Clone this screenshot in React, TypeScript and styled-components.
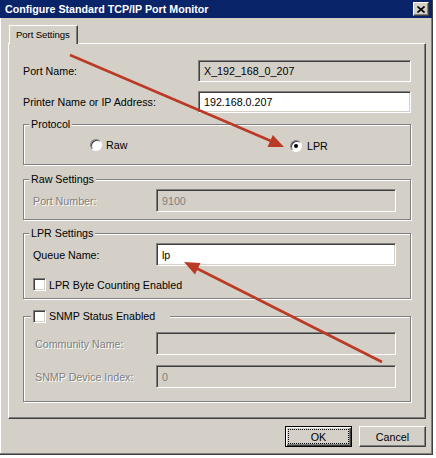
import styled, { createGlobalStyle } from "styled-components";

const face = "#d4d0c8";
const light = "#ffffff";
const shadow = "#808080";
const dark = "#404040";

const GlobalStyle = createGlobalStyle`
  html, body {
    margin: 0;
    background: #ffffff;
  }
  body {
    font-family: "Liberation Sans", Arial, sans-serif;
    font-size: 10.7px;
    color: #000;
  }
`;

const Page = styled.div`
  position: relative;
  width: 436px;
  height: 458px;
  overflow: hidden;
`;

const Window = styled.div`
  width: 433px;
  height: 455px;
  box-sizing: border-box;
  background: ${face};
  border-right: 1px solid ${dark};
  border-bottom: 1px solid ${dark};
  box-shadow: inset -1px -1px ${shadow}, inset 1px 0 ${light};
  display: flex;
  flex-direction: column;
`;

const TitleBar = styled.div`
  flex-shrink: 0;
  height: 18px;
  display: flex;
  align-items: center;
  justify-content: space-between;
  padding: 0 3px 0 5px;
  background: #0a246a;
  color: #fff;
  font-weight: 700;
  font-size: 10.7px;
`;

const CloseButton = styled.span`
  width: 16px;
  height: 14px;
  box-sizing: border-box;
  background: ${face};
  border: 1px solid;
  border-color: ${light} ${dark} ${dark} ${light};
  box-shadow: inset -1px -1px ${shadow};
  display: flex;
  align-items: center;
  justify-content: center;
`;

const Body = styled.div`
  flex: 1;
  padding: 7px 6px 0 8px;
  display: flex;
  flex-direction: column;
`;

const TabStrip = styled.div`
  display: flex;
  height: 18px;
  padding-left: 1px;
`;

const Tab = styled.div`
  position: relative;
  z-index: 1;
  height: 19px;
  margin-bottom: -1px;
  box-sizing: border-box;
  padding: 2px 7px 0 6px;
  background: ${face};
  border: 1px solid;
  border-bottom: none;
  border-color: ${light} ${dark} transparent ${light};
  box-shadow: inset -1px 0 ${shadow};
  font-size: 9.6px;
  line-height: 14px;
  letter-spacing: -0.1px;
`;

const Panel = styled.div`
  height: 376px;
  box-sizing: border-box;
  border: 1px solid;
  border-color: ${light} ${dark} ${dark} ${light};
  box-shadow: inset -1px -1px ${shadow};
  padding: 16px 14px 0 14px;
  display: flex;
  flex-direction: column;
`;

const TopRow = styled.div<{ $mt?: number }>`
  display: grid;
  grid-template-columns: 175px 1fr;
  align-items: center;
  margin-top: ${(p) => p.$mt ?? 0}px;
`;

const Label = styled.span<{ $disabled?: boolean; $indent?: number }>`
  padding-left: ${(p) => p.$indent ?? 0}px;
  white-space: nowrap;
  color: ${(p) => (p.$disabled ? shadow : "#000")};
  text-shadow: ${(p) => (p.$disabled ? `1px 1px 0 ${light}` : "none")};
`;

const Field = styled.div<{ $disabled?: boolean; $readOnly?: boolean; $h?: number }>`
  height: ${(p) => p.$h ?? 23}px;
  box-sizing: border-box;
  border: 1px solid;
  border-color: ${shadow} ${light} ${light} ${shadow};
  box-shadow: inset 1px 1px ${dark}, inset -1px -1px ${face};
  background: ${(p) => (p.$disabled || p.$readOnly ? face : "#fff")};
  color: ${(p) => (p.$disabled ? shadow : "#000")};
  padding-left: 5px;
  display: flex;
  align-items: center;
`;

const Group = styled.fieldset<{ $mt: number }>`
  margin: ${(p) => p.$mt}px 0 0;
  padding: 0;
  min-width: 0;
  border: 1px solid ${shadow};
  box-shadow: inset 1px 1px ${light}, 1px 1px ${light};
`;

const Legend = styled.legend<{ $ml?: number; $pr?: number }>`
  margin-left: ${(p) => p.$ml ?? 5}px;
  padding: 0 ${(p) => p.$pr ?? 2}px 0 2px;
  line-height: 13px;
  background: ${face};
  display: flex;
  align-items: center;
  gap: 3px;
`;

const GroupBody = styled.div<{ $pad: string; $gap?: number }>`
  padding: ${(p) => p.$pad};
  display: flex;
  flex-direction: column;
  gap: ${(p) => p.$gap ?? 0}px;
`;

const GroupRow = styled.div`
  display: grid;
  grid-template-columns: 123px 1fr;
  align-items: center;
`;

const RadioRow = styled.div`
  display: grid;
  grid-template-columns: 200px auto;
  padding-left: 57px;
  height: 13px;
  align-items: center;
`;

const Option = styled.span<{ $gap?: number; $dy?: number }>`
  display: inline-flex;
  align-items: center;
  gap: ${(p) => p.$gap ?? 4}px;
  margin-top: ${(p) => p.$dy ?? 0}px;
`;

const Radio = styled.span<{ $checked?: boolean }>`
  width: 12px;
  height: 12px;
  box-sizing: border-box;
  border-radius: 50%;
  background: #fff;
  border: 1px solid;
  border-color: ${shadow} ${light} ${light} ${shadow};
  box-shadow: inset 1px 1px ${dark};
  display: flex;
  align-items: center;
  justify-content: center;
  &::after {
    content: "";
    width: 4px;
    height: 4px;
    border-radius: 50%;
    background: ${(p) => (p.$checked ? "#000" : "transparent")};
  }
`;

const Checkbox = styled.span`
  width: 13px;
  height: 13px;
  box-sizing: border-box;
  background: #fff;
  border: 1px solid;
  border-color: ${shadow} ${light} ${light} ${shadow};
  box-shadow: inset 1px 1px ${dark}, inset -1px -1px ${face};
  flex-shrink: 0;
`;

const Footer = styled.div`
  display: flex;
  justify-content: flex-end;
  gap: 7px;
  padding-top: 7px;
`;

const Button = styled.div<{ $default?: boolean }>`
  width: 67px;
  height: 21px;
  box-sizing: border-box;
  background: ${face};
  border: 1px solid;
  border-color: ${(p) => (p.$default ? "#000" : `${light} ${dark} ${dark} ${light}`)};
  box-shadow: ${(p) =>
    p.$default
      ? `inset 1px 1px ${light}, inset -1px -1px ${dark}, inset -2px -2px ${shadow}`
      : `inset -1px -1px ${shadow}`};
  display: flex;
  align-items: stretch;
  justify-content: center;
  padding: 2px;
`;

const ButtonText = styled.span<{ $focus?: boolean }>`
  flex: 1;
  display: flex;
  align-items: center;
  justify-content: center;
  border: 1px dotted ${(p) => (p.$focus ? "#000" : "transparent")};
`;

const Annotations = styled.svg`
  position: absolute;
  top: 0;
  left: 0;
  pointer-events: none;
`;

const arrowRed = "#bb3a26";

export default function App() {
  return (
    <>
      <GlobalStyle />
      <Page>
        <Window>
          <TitleBar>
            <span>Configure Standard TCP/IP Port Monitor</span>
            <CloseButton>
              <svg width="8" height="7" viewBox="0 0 8 7">
                <path d="M0.5 0.5 L7.5 6.5 M7.5 0.5 L0.5 6.5" stroke="#000" strokeWidth="1.6" />
              </svg>
            </CloseButton>
          </TitleBar>
          <Body>
            <TabStrip>
              <Tab>Port Settings</Tab>
            </TabStrip>
            <Panel>
              <TopRow>
                <Label>Port Name:</Label>
                <Field $readOnly $h={22}>X_192_168_0_207</Field>
              </TopRow>
              <TopRow $mt={9}>
                <Label>Printer Name or IP Address:</Label>
                <Field $h={22}>192.168.0.207</Field>
              </TopRow>

              <Group $mt={5}>
                <Legend>Protocol</Legend>
                <GroupBody $pad="7px 14px 13px 9px">
                  <RadioRow>
                    <Option>
                      <Radio />
                      Raw
                    </Option>
                    <Option $gap={5} $dy={2}>
                      <Radio $checked />
                      LPR
                    </Option>
                  </RadioRow>
                </GroupBody>
              </Group>

              <Group $mt={8}>
                <Legend>Raw Settings</Legend>
                <GroupBody $pad="3px 14px 7px 9px">
                  <GroupRow>
                    <Label $disabled>Port Number:</Label>
                    <Field $disabled>9100</Field>
                  </GroupRow>
                </GroupBody>
              </Group>

              <Group $mt={7}>
                <Legend>LPR Settings</Legend>
                <GroupBody $pad="3px 14px 7px 9px" $gap={12}>
                  <GroupRow>
                    <Label>Queue Name:</Label>
                    <Field>lp</Field>
                  </GroupRow>
                  <Option $gap={3}>
                    <Checkbox />
                    LPR Byte Counting Enabled
                  </Option>
                </GroupBody>
              </Group>

              <Group $mt={11}>
                <Legend $ml={7} $pr={15}>
                  <Checkbox />
                  SNMP Status Enabled
                </Legend>
                <GroupBody $pad="9px 14px 13px 9px" $gap={10}>
                  <GroupRow>
                    <Label $disabled $indent={2}>Community Name:</Label>
                    <Field $disabled />
                  </GroupRow>
                  <GroupRow>
                    <Label $disabled $indent={2}>SNMP Device Index:</Label>
                    <Field $disabled>0</Field>
                  </GroupRow>
                </GroupBody>
              </Group>
            </Panel>
            <Footer>
              <Button $default>
                <ButtonText $focus>OK</ButtonText>
              </Button>
              <Button>
                <ButtonText>Cancel</ButtonText>
              </Button>
            </Footer>
          </Body>
        </Window>

        <Annotations width="436" height="458" viewBox="0 0 436 458">
          <line x1="70" y1="55" x2="271" y2="141" stroke={arrowRed} strokeWidth="2.6" />
          <polygon points="284,147 272.8,135 267.5,147" fill={arrowRed} />
          <line x1="382" y1="362" x2="197" y2="268.5" stroke={arrowRed} strokeWidth="2.6" />
          <polygon points="184,262 200.5,263 195,274.5" fill={arrowRed} />
        </Annotations>
      </Page>
    </>
  );
}
